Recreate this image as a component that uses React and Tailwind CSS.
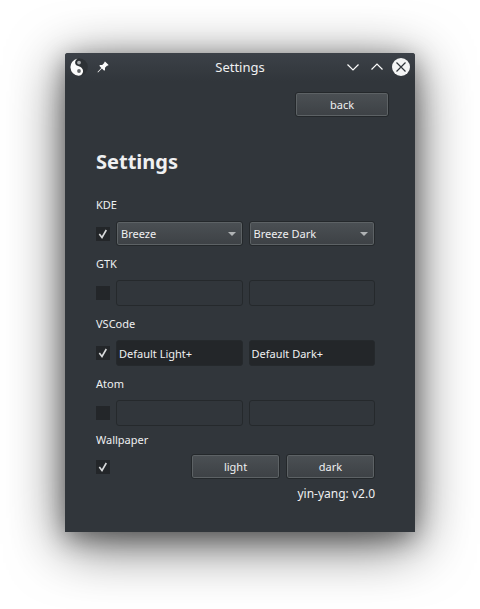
import { useState } from "react";

const raised =
  "h-[25px] rounded-[3px] border border-[#24282b] bg-gradient-to-b from-[#4b5054] to-[#3d4145] shadow-[inset_0_0_0_1px_#5d6265] text-[11px] leading-4 text-[#eff0f1]";

function YinYang() {
  return (
    <svg viewBox="0 0 18 18" className="size-[18px]" aria-hidden="true">
      <circle cx="9" cy="9" r="8.8" fill="#2d3135" />
      <path
        d="M7.5 .4A8.8 8.8 0 0 0 8.5 17.8A4.6 4.6 0 0 0 11.5 9.8C10.5 8.4 8.5 8.6 6.8 7.6C4.4 6 4.6 2.4 7.5 .4Z"
        fill="#fcfcfc"
      />
      <circle cx="9" cy="4.6" r="1.9" fill="#a9acae" />
      <circle cx="9" cy="13" r="1.9" fill="#63676a" />
    </svg>
  );
}

function Pin() {
  return (
    <svg viewBox="0 0 12 12" className="size-3" aria-hidden="true">
      <path
        d="M8 .4L11.6 4L10.8 4.8L10.2 4.6L8 6.8L8 8.9L7.2 9.7L4.9 7.4L1 11.4L.5 10.9L4.3 6.9L2.3 4.8L3.1 4L5.2 4L7.4 1.8L7.2 1.2Z"
        fill="#fcfcfc"
      />
    </svg>
  );
}

function TitleBar() {
  return (
    <header className="flex h-7 items-center rounded-t-[3px] bg-gradient-to-b from-[#3c4148] to-[#31363b] px-[5px]">
      <div className="flex flex-1 items-center gap-[6px]">
        <YinYang />
        <button type="button" aria-label="Keep above" className="p-[3px]">
          <Pin />
        </button>
      </div>
      <h1 className="font-['Noto_Sans',sans-serif] text-[13px] leading-5 text-[#eff0f1]">Settings</h1>
      <div className="flex flex-1 items-center justify-end gap-[6px]">
        <button type="button" aria-label="Minimize">
          <svg viewBox="0 0 18 18" className="size-[18px]" fill="none" stroke="#fcfcfc" strokeWidth="1.2">
            <path d="M3.5 6.5L9 12L14.5 6.5" />
          </svg>
        </button>
        <button type="button" aria-label="Maximize">
          <svg viewBox="0 0 18 18" className="size-[18px]" fill="none" stroke="#fcfcfc" strokeWidth="1.2">
            <path d="M3.5 11.5L9 6L14.5 11.5" />
          </svg>
        </button>
        <button type="button" aria-label="Close">
          <svg viewBox="0 0 18 18" className="size-[18px]" fill="none">
            <circle cx="9" cy="9" r="9" fill="#f4f5f5" />
            <path d="M4.5 4.5L13.5 13.5M13.5 4.5L4.5 13.5" stroke="#31363b" strokeWidth="1.2" />
          </svg>
        </button>
      </div>
    </header>
  );
}

function Check({ id, checked, onChange }) {
  return (
    <span className="grid size-[14px] shrink-0">
      <input
        id={id}
        type="checkbox"
        checked={checked}
        onChange={(e) => onChange(e.target.checked)}
        className="col-start-1 row-start-1 size-[14px] appearance-none bg-[#232629]"
      />
      {checked && (
        <svg
          viewBox="0 0 14 14"
          className="pointer-events-none col-start-1 row-start-1 size-[14px]"
          fill="none"
          stroke="#d8dadb"
          strokeWidth="1.6"
        >
          <path d="M3.3 7L6 10.5L10.3 3" />
        </svg>
      )}
    </span>
  );
}

function Combo({ label, value }) {
  return (
    <span className="grid flex-1 items-center">
      <select
        aria-label={label}
        defaultValue={value}
        className={`col-start-1 row-start-1 w-full appearance-none pl-1 pr-5 ${raised}`}
      >
        <option>Breeze</option>
        <option>Breeze Dark</option>
      </select>
      <svg
        viewBox="0 0 8 4"
        className="pointer-events-none col-start-1 row-start-1 mr-[7px] h-1 w-2 justify-self-end"
        aria-hidden="true"
      >
        <path d="M0 0H8L4 4Z" fill="#b0b3b5" />
      </svg>
    </span>
  );
}

function Field({ label, value, enabled }) {
  return (
    <input
      type="text"
      aria-label={label}
      defaultValue={value}
      disabled={!enabled}
      className="h-[26px] w-0 flex-1 rounded-[3px] border border-[#25292c] bg-[#232629] px-[2px] text-[11px] leading-4 text-[#eff0f1] disabled:bg-transparent"
    />
  );
}

function Group({ name, kind, initial, light, dark }) {
  const [on, setOn] = useState(initial);
  const id = name.toLowerCase();
  return (
    <section className="flex flex-col gap-2">
      <label htmlFor={id} className="text-[11px] leading-4">
        {name}
      </label>
      <div className="flex items-center gap-[6px]">
        <Check id={id} checked={on} onChange={setOn} />
        {kind === "combo" ? (
          <>
            <Combo label={`${name} light theme`} value={light} />
            <Combo label={`${name} dark theme`} value={dark} />
          </>
        ) : (
          <>
            <Field label={`${name} light theme`} value={light} enabled={on} />
            <Field label={`${name} dark theme`} value={dark} enabled={on} />
          </>
        )}
      </div>
    </section>
  );
}

export default function App() {
  const [wallpaper, setWallpaper] = useState(true);
  return (
    <div className="bg-white px-[65px] pb-[77px] pt-[53px] font-['Noto_Sans',sans-serif] text-[#eff0f1]">
      <main className="rounded-t-[3px] bg-[#31363b] shadow-[0_12px_56px_rgba(0,0,0,0.65),0_6px_24px_rgba(0,0,0,0.35)]">
        <TitleBar />
        <div className="flex justify-end pr-[26px] pt-[11px]">
          <button type="button" className={`w-[94px] ${raised}`}>
            back
          </button>
        </div>
        <div className="pb-[30px] pl-[31px] pr-10 pt-[33px]">
          <h2 className="text-[20px] font-bold leading-6">Settings</h2>
          <div className="mt-[23px] flex flex-col gap-[10px]">
            <Group name="KDE" kind="combo" initial={true} light="Breeze" dark="Breeze Dark" />
            <Group name="GTK" kind="field" initial={false} light="" dark="" />
            <Group name="VSCode" kind="field" initial={true} light="Default Light+" dark="Default Dark+" />
            <Group name="Atom" kind="field" initial={false} light="" dark="" />
          </div>
          <section className="mt-[6px] flex flex-col gap-[6px]">
            <label htmlFor="wallpaper" className="text-[11px] leading-4">
              Wallpaper
            </label>
            <div className="flex items-center gap-[6px]">
              <Check id="wallpaper" checked={wallpaper} onChange={setWallpaper} />
              <button type="button" className={`ml-auto w-[89px] ${raised}`}>
                light
              </button>
              <button type="button" className={`w-[89px] ${raised}`}>
                dark
              </button>
            </div>
          </section>
          <p className="mt-[7px] text-right text-[12px] leading-4">yin-yang: v2.0</p>
        </div>
      </main>
    </div>
  );
}
